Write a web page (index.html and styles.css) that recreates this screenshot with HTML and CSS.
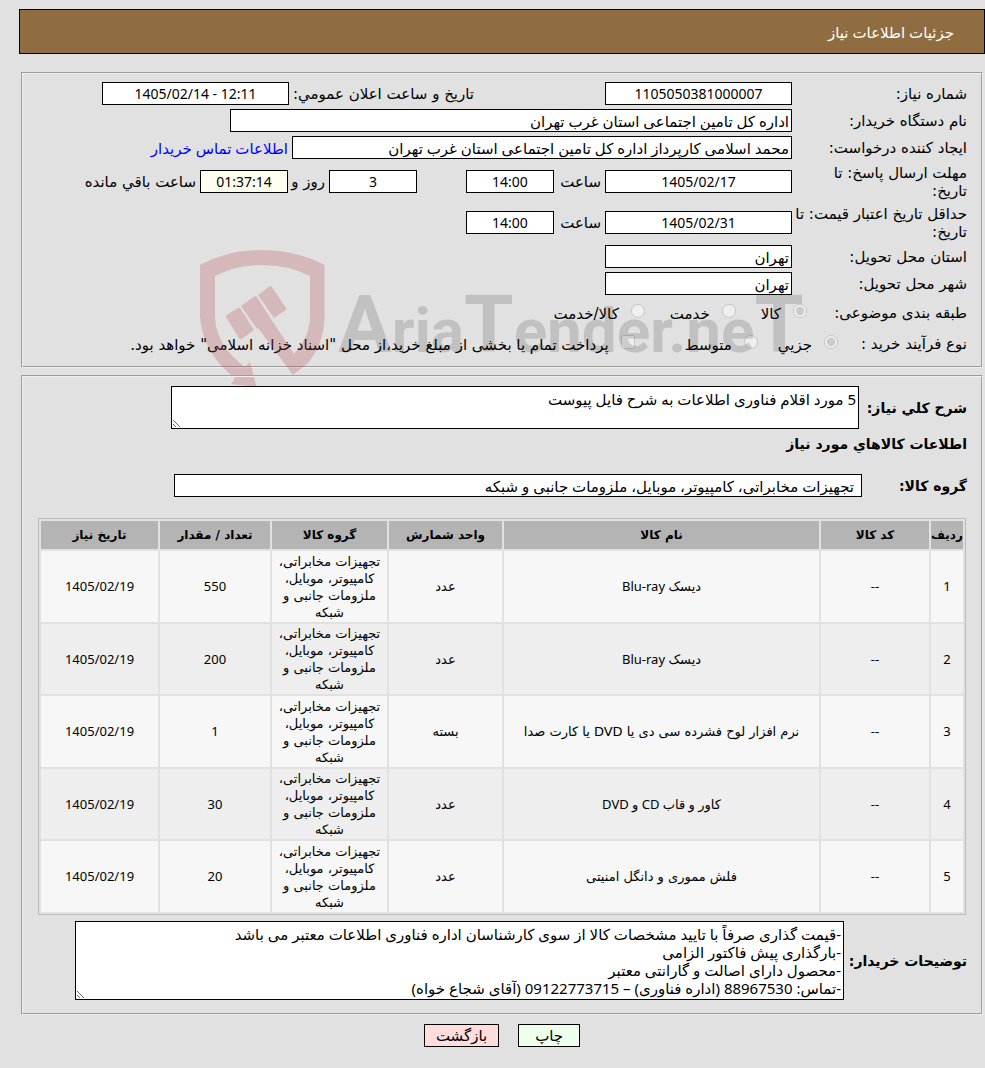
FILE: index.html
```html
<!DOCTYPE html>
<html lang="fa" dir="rtl">
<head>
<meta charset="utf-8">
<title>جزئیات اطلاعات نیاز</title>
<link rel="stylesheet" href="styles.css">
</head>
<body>
<header class="page-header"><h1>جزئیات اطلاعات نیاز</h1></header>
<main>
<section class="panel summary">
  <div class="row">
    <label class="name" for="need-no">شماره نیاز:</label>
    <div class="group group-number"><input class="box num w-mid" id="need-no" value="1105050381000007" readonly></div>
    <label for="announce">تاریخ و ساعت اعلان عمومي:</label>
    <input class="box num w-mid" id="announce" dir="ltr" value="1405/02/14 - 12:11" readonly>
  </div>
  <div class="row">
    <label class="name" for="org">نام دستگاه خریدار:</label>
    <input class="box w-org text" id="org" value="اداره کل تامین اجتماعی استان غرب تهران" readonly>
  </div>
  <div class="row">
    <label class="name" for="creator">ایجاد کننده درخواست:</label>
    <input class="box w-creator text" id="creator" value="محمد اسلامی کارپرداز اداره کل تامین اجتماعی استان غرب تهران" readonly>
    <a class="contact" href="#contact">اطلاعات تماس خریدار</a>
  </div>
  <div class="row tall">
    <label class="name" for="reply-date">مهلت ارسال پاسخ: تا<br>تاریخ:</label>
    <div class="group group-deadline">
      <input class="box num w-mid" id="reply-date" value="1405/02/17" readonly>
      <label class="hour" for="reply-time">ساعت</label>
      <input class="box num w-small" id="reply-time" value="14:00" readonly>
    </div>
    <input class="box num w-small" id="days" value="3" readonly>
    <label class="days" for="days">روز و</label>
    <input class="box num w-small remaining" id="remaining" value="01:37:14" readonly>
    <label for="remaining">ساعت باقي مانده</label>
  </div>
  <div class="row tall">
    <label class="name" for="valid-date">حداقل تاریخ اعتبار قیمت: تا<br>تاریخ:</label>
    <input class="box num w-mid" id="valid-date" value="1405/02/31" readonly>
    <label class="hour" for="valid-time">ساعت</label>
    <input class="box num w-small" id="valid-time" value="14:00" readonly>
  </div>
  <div class="row">
    <label class="name" for="province">استان محل تحویل:</label>
    <input class="box w-mid text" id="province" value="تهران" readonly>
  </div>
  <div class="row">
    <label class="name" for="city">شهر محل تحویل:</label>
    <input class="box w-mid text" id="city" value="تهران" readonly>
  </div>
  <div class="row options category" role="radiogroup" aria-labelledby="cat">
    <span class="name name-category" id="cat">طبقه بندی موضوعی:</span>
    <label class="choice"><input type="radio" name="cat" checked disabled><span>کالا</span></label>
    <label class="choice"><input type="radio" name="cat" disabled><span>خدمت</span></label>
    <label class="choice"><input type="radio" name="cat" disabled><span>کالا/خدمت</span></label>
  </div>
  <div class="row options process" role="radiogroup" aria-labelledby="proc">
    <span class="name name-process" id="proc">نوع فرآیند خرید :</span>
    <label class="choice"><input type="radio" name="proc" checked disabled><span>جزيي</span></label>
    <label class="choice"><input type="radio" name="proc" disabled><span>متوسط</span></label>
    <label class="choice payment"><input type="checkbox" disabled><span>پرداخت تمام یا بخشی از مبلغ خرید،از محل "اسناد خزانه اسلامی" خواهد بود.</span></label>
  </div>
  <svg class="watermark" viewBox="200 249 602 140" aria-hidden="true">
    <path class="mark" fill-rule="evenodd" d="M200 265Q228 250 262 250T324.500 265V317Q324 343 308 363L293 375L258 328L271 319L294 354Q310 336 310 317V276Q288 265 262 265T215 276V317Q216 346 245 367L250 362L256.500 387L231 384L235 378Q203 354 200 317Z"/>
    <path class="mark" d="M226 317Q225 316 227 315L238 308Q239 307 240 308L254 330L241 339.500Q240 340 239 338ZM241 306L255 296Q256 296 257 297L271 319L258 328L257 329ZM258 295L270 286Q272 286 272 287L286 308Q287 309 286 310L274 318Z"/>
    <text class="mark-text" direction="ltr" x="338" y="352"><tspan class="cap">A</tspan>ria<tspan class="cap">T</tspan>ender.ne<tspan class="cap">T</tspan></text>
  </svg>
</section>

<section class="panel details">
  <div class="row wide-row">
    <label class="title name-desc" for="desc">شرح کلي نیاز:</label>
    <textarea class="box area area-desc" id="desc" readonly>5 مورد اقلام فناوری اطلاعات به شرح فایل پیوست</textarea>
  </div>
  <h2 class="title">اطلاعات کالاهاي مورد نیاز</h2>
  <div class="row group-row">
    <label class="title name-group" for="grp">گروه کالا:</label>
    <input class="box text w-group" id="grp" value="تجهیزات مخابراتی، کامپیوتر، موبایل، ملزومات جانبی و شبکه" readonly>
  </div>
  <table class="items">
    <colgroup><col class="c-row"><col class="c-code"><col><col class="c-unit"><col class="c-group"><col class="c-count"><col class="c-date"></colgroup>
    <thead><tr><th>ردیف</th><th>کد کالا</th><th>نام کالا</th><th>واحد شمارش</th><th>گروه کالا</th><th>تعداد / مقدار</th><th>تاریخ نیاز</th></tr></thead>
    <tbody>
      <tr><td class="digits">1</td><td class="digits">--</td><td class="mixed">دیسک Blu-ray</td><td>عدد</td><td>تجهیزات مخابراتی،<br>کامپیوتر، موبایل،<br>ملزومات جانبی و<br>شبکه</td><td class="digits">550</td><td class="digits">1405/02/19</td></tr>
      <tr><td class="digits">2</td><td class="digits">--</td><td class="mixed">دیسک Blu-ray</td><td>عدد</td><td>تجهیزات مخابراتی،<br>کامپیوتر، موبایل،<br>ملزومات جانبی و<br>شبکه</td><td class="digits">200</td><td class="digits">1405/02/19</td></tr>
      <tr><td class="digits">3</td><td class="digits">--</td><td>نرم افزار لوح فشرده سی دی یا DVD یا کارت صدا</td><td>بسته</td><td>تجهیزات مخابراتی،<br>کامپیوتر، موبایل،<br>ملزومات جانبی و<br>شبکه</td><td class="digits">1</td><td class="digits">1405/02/19</td></tr>
      <tr><td class="digits">4</td><td class="digits">--</td><td class="mixed">کاور و قاب CD و DVD</td><td>عدد</td><td>تجهیزات مخابراتی،<br>کامپیوتر، موبایل،<br>ملزومات جانبی و<br>شبکه</td><td class="digits">30</td><td class="digits">1405/02/19</td></tr>
      <tr><td class="digits">5</td><td class="digits">--</td><td>فلش مموری و دانگل امنیتی</td><td>عدد</td><td>تجهیزات مخابراتی،<br>کامپیوتر، موبایل،<br>ملزومات جانبی و<br>شبکه</td><td class="digits">20</td><td class="digits">1405/02/19</td></tr>
    </tbody>
  </table>
  <div class="row wide-row">
    <label class="title name-notes" for="notes">توضیحات خریدار:</label>
    <textarea class="box area area-notes" id="notes" readonly>-قیمت گذاری صرفاً با تایید مشخصات کالا از سوی کارشناسان اداره فناوری اطلاعات معتبر می باشد
-بارگذاری پیش فاکتور الزامی
-محصول دارای اصالت و گارانتی معتبر
-تماس: 88967530 (اداره فناوری) – 09122773715 (آقای شجاع خواه)</textarea>
  </div>
</section>
<div class="actions">
  <button class="btn print" type="button">چاپ</button>
  <button class="btn back" type="button">بازگشت</button>
</div>
</main>
</body>
</html>
```
FILE: styles.css
```css
* { box-sizing: border-box; }
body {
  margin: 0;
  padding: 9px 0 22px 19px;
  background: #e1e1e1;
  color: #000;
  font: 15px/18px "DejaVu Sans", sans-serif;
}
input, textarea, button { font: inherit; color: inherit; }
.page-header {
  border: 1px solid #000;
  background: #8f6d40;
  padding: 13px 30px 12px;
}
h1 { margin: 0; font-size: 15px; line-height: 18px; font-weight: normal; color: #fff; }
h1, .contact, .text, .area { font-family: "Noto Sans", "DejaVu Sans", sans-serif; }
main { padding: 18px 2px 0; }
.panel {
  position: relative;
  border: 2px groove #f0f0f0;
  padding: 8px 14px;
}
.summary { display: flex; flex-direction: column; gap: 4px; padding-bottom: 9px; }
.row { display: flex; align-items: center; gap: 4px; white-space: nowrap; }
.name { width: 171px; flex: none; }
.tall { min-height: 37px; }
.box {
  height: 23px;
  margin: 0;
  border: 1px solid #000;
  border-radius: 0;
  background: #fff;
  padding: 0 2px;
  text-align: center;
  outline: none;
  min-width: 0;
}
.num { font-family: "Noto Sans", "DejaVu Sans", sans-serif; font-size: 14px; }
.text { text-align: right; }
.w-mid { width: 187px; }
.w-small { width: 88px; }
.w-org { width: 562px; }
.w-creator { width: 500px; }
.w-group { width: 688px; padding: 0 7px; }
.remaining { background: #fffff0; }
.group { display: flex; align-items: center; gap: 4px; }
.group-number { width: 314px; }
.group-deadline { width: 371px; }
.hour { width: 43px; }
.days { width: 33px; }
.contact { color: #00f; text-decoration: none; }
.options { min-height: 27px; }
.category { gap: 25px; }
.process { gap: 20px; }
.name-category { width: 135px; }
.name-process { width: 109px; }
.choice { display: flex; align-items: center; gap: 12px; }
.choice input { width: 14px; height: 14px; margin: 0 0 4px; }
.choice span { padding-top: 3px; }
.payment { margin-right: 30px; }
.watermark {
  position: absolute;
  top: 175px;
  right: 179px;
  width: 602px;
  height: 140px;
  pointer-events: none;
}
.mark { fill: rgba(181, 65, 73, .25); }
.mark-text {
  fill: rgba(0, 0, 0, .14);
  font: bold 62px Roboto, "Liberation Sans", sans-serif;
}
.cap { font-size: 80px; }
.details { margin-top: 7px; padding: 9px 14px 13px; }
.title { font-size: 14px; line-height: 18px; font-weight: bold; }
h2.title { margin: 6px 0 0; }
.area { resize: both; padding: 3px 2px; text-align: right; overflow: hidden; white-space: pre-wrap; }
.area-desc { width: 688px; height: 43px; }
.area-notes { width: 769px; height: 79px; }
.group-row { margin-top: 21px; }
.name-desc { width: 104px; }
.name-notes { width: 119px; }
.name-group { width: 101px; }
.items {
  width: calc(100% - 2px);
  margin: 21px 1px 6px;
  table-layout: fixed;
  border: 1px solid #bbb;
  border-collapse: separate;
  border-spacing: 2px;
  font-size: 13px;
  line-height: 17px;
  text-align: center;
}
.items th { height: 28px; padding: 0; background: #b4b4b4; font-size: 12px; white-space: nowrap; }
.items td { height: 71px; padding: 1px 0; background: #f7f7f7; }
.items tr:nth-child(even) td { height: 70px; background: #eee; }
.items .digits { font-family: "Noto Sans", sans-serif; }
.items .mixed { font-family: "Noto Sans", "DejaVu Sans", sans-serif; }
.c-row { width: 32px; }
.c-code { width: 108px; }
.c-unit { width: 113px; }
.c-group { width: 115px; }
.c-count { width: 110px; }
.c-date { width: 117px; }
.actions { display: flex; justify-content: center; gap: 19px; padding: 9px 0 0; }
.btn { height: 23px; border: 1px solid #000; padding: 0 11px; cursor: pointer; }
.print { background: #efe; padding: 0 16px; }
.back { background: #fdd; }
```
